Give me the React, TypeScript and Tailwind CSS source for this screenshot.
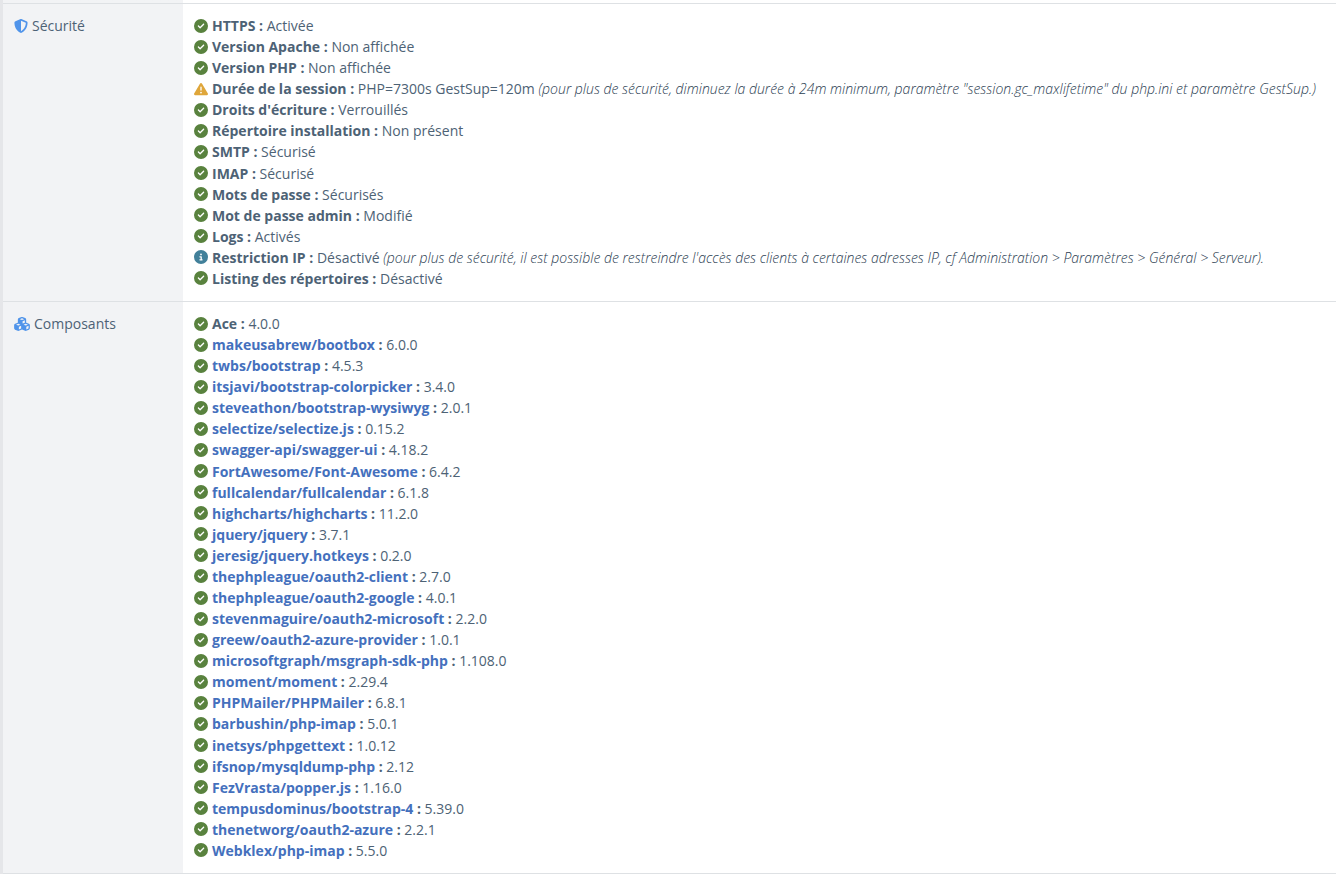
import type { ReactNode } from "react";
import {
  FaCircleCheck,
  FaCircleInfo,
  FaCubes,
  FaShieldHalved,
  FaTriangleExclamation,
} from "react-icons/fa6";

type Status = "ok" | "warning" | "info";

interface Check {
  label: string;
  value: string;
  status?: Status;
  note?: string;
}

const checks: Check[] = [
  { label: "HTTPS", value: "Activée" },
  { label: "Version Apache", value: "Non affichée" },
  { label: "Version PHP", value: "Non affichée" },
  {
    label: "Durée de la session",
    value: "PHP=7300s GestSup=120m",
    status: "warning",
    note: '(pour plus de sécurité, diminuez la durée à 24m minimum, paramètre "session.gc_maxlifetime" du php.ini et paramètre GestSup.)',
  },
  { label: "Droits d'écriture", value: "Verrouillés" },
  { label: "Répertoire installation", value: "Non présent" },
  { label: "SMTP", value: "Sécurisé" },
  { label: "IMAP", value: "Sécurisé" },
  { label: "Mots de passe", value: "Sécurisés" },
  { label: "Mot de passe admin", value: "Modifié" },
  { label: "Logs", value: "Activés" },
  {
    label: "Restriction IP",
    value: "Désactivé",
    status: "info",
    note: "(pour plus de sécurité, il est possible de restreindre l'accès des clients à certaines adresses IP, cf Administration > Paramètres > Général > Serveur).",
  },
  { label: "Listing des répertoires", value: "Désactivé" },
];

const components: [string, string][] = [
  ["makeusabrew/bootbox", "6.0.0"],
  ["twbs/bootstrap", "4.5.3"],
  ["itsjavi/bootstrap-colorpicker", "3.4.0"],
  ["steveathon/bootstrap-wysiwyg", "2.0.1"],
  ["selectize/selectize.js", "0.15.2"],
  ["swagger-api/swagger-ui", "4.18.2"],
  ["FortAwesome/Font-Awesome", "6.4.2"],
  ["fullcalendar/fullcalendar", "6.1.8"],
  ["highcharts/highcharts", "11.2.0"],
  ["jquery/jquery", "3.7.1"],
  ["jeresig/jquery.hotkeys", "0.2.0"],
  ["thephpleague/oauth2-client", "2.7.0"],
  ["thephpleague/oauth2-google", "4.0.1"],
  ["stevenmaguire/oauth2-microsoft", "2.2.0"],
  ["greew/oauth2-azure-provider", "1.0.1"],
  ["microsoftgraph/msgraph-sdk-php", "1.108.0"],
  ["moment/moment", "2.29.4"],
  ["PHPMailer/PHPMailer", "6.8.1"],
  ["barbushin/php-imap", "5.0.1"],
  ["inetsys/phpgettext", "1.0.12"],
  ["ifsnop/mysqldump-php", "2.12"],
  ["FezVrasta/popper.js", "1.16.0"],
  ["tempusdominus/bootstrap-4", "5.39.0"],
  ["thenetworg/oauth2-azure", "2.2.1"],
  ["Webklex/php-imap", "5.5.0"],
];

function StatusIcon({ status }: { status: Status }) {
  if (status === "warning") {
    return <FaTriangleExclamation className="size-[14px] shrink-0 text-[#dfa63a]" aria-hidden />;
  }
  if (status === "info") {
    return <FaCircleInfo className="size-[14px] shrink-0 text-[#42809a]" aria-hidden />;
  }
  return <FaCircleCheck className="size-[14px] shrink-0 text-[#59823e]" aria-hidden />;
}

function Item({
  status = "ok",
  label,
  value,
  note,
}: {
  status?: Status;
  label: ReactNode;
  value: string;
  note?: string;
}) {
  return (
    <li className="flex items-center gap-1">
      <StatusIcon status={status} />
      <span className="whitespace-nowrap">
        <strong className="font-bold">{label} :</strong> {value}
        {note && <em className="font-light text-[#2c4052]"> {note}</em>}
      </span>
    </li>
  );
}

function Section({ icon, title, children }: { icon: ReactNode; title: string; children: ReactNode }) {
  return (
    <tr className="border-y border-[#dee1e4] align-top">
      <th scope="row" className="bg-[#f2f3f5] px-[11px] pt-[11px] pb-3 text-left font-normal">
        <span className="flex items-center gap-1">
          {icon}
          {title}
        </span>
      </th>
      <td className="px-[11px] pt-[11px] pb-3">{children}</td>
    </tr>
  );
}

export default function App() {
  return (
    <div className="min-h-screen bg-[#e5e6e9] pl-[3px] font-['Open_Sans',sans-serif] text-[14px] leading-[21px] text-[#4d6275]">
      <div className="bg-linear-to-r from-[#f2f3f5] from-[180px] to-white to-[180px] pt-[3px]">
        <table className="w-full table-fixed border-collapse bg-white">
          <colgroup>
            <col className="w-[180px]" />
            <col />
          </colgroup>
          <tbody>
            <Section
              icon={<FaShieldHalved className="size-[14px] text-[#5094ea]" aria-hidden />}
              title="Sécurité"
            >
              <ul className="flex min-h-[274px] flex-col justify-between">
                {checks.map((check) => (
                  <Item key={check.label} {...check} />
                ))}
              </ul>
            </Section>
            <Section
              icon={<FaCubes className="h-[14px] w-4 text-[#5094ea]" aria-hidden />}
              title="Composants"
            >
              <ul className="flex min-h-[548px] flex-col justify-between">
                <Item label="Ace" value="4.0.0" />
                {components.map(([name, version]) => (
                  <Item
                    key={name}
                    label={
                      <a href={`https://github.com/${name}`} className="text-[#4470bd] hover:underline">
                        {name}
                      </a>
                    }
                    value={version}
                  />
                ))}
              </ul>
            </Section>
          </tbody>
        </table>
      </div>
    </div>
  );
}
